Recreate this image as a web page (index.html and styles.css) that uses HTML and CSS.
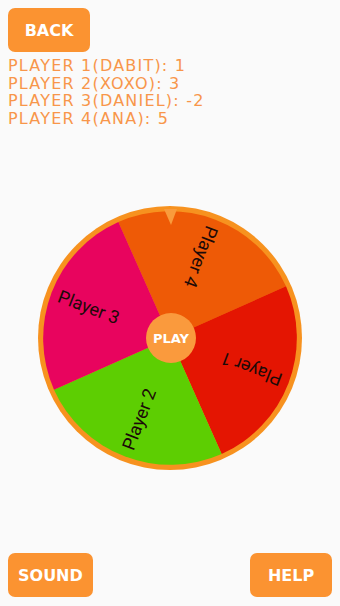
FILE: index.html
```html
<!DOCTYPE html>
<html>

<head>
    <meta charset="utf-8">
    <title>Spin</title>
    <link rel="stylesheet" href="styles.css">
</head>

<body>
    <header>
        <div class="btn">BACK</div>
    </header>
    <div id="scores">
        <p>PLAYER 1(DABIT): 1</p>
        <p>PLAYER 2(XOXO): 3</p>
        <p>PLAYER 3(DANIEL): -2</p>
        <p>PLAYER 4(ANA): 5</p>
    </div>
    <div id="wheelbox">
        <svg class="wheel" width="266" height="266" viewBox="-133 -133 266 266">
            <circle cx="0" cy="0" r="132" fill="#f7921f" />
            <!-- wedges -->
            <path d="M0 0 L-51.65 -116.02 A127.5 127.5 0 0 1 116.02 -51.65 Z" fill="#ee5a06" />
            <path d="M0 0 L116.02 -51.65 A127.5 127.5 0 0 1 51.65 116.02 Z" fill="#e41502" />
            <path d="M0 0 L51.65 116.02 A127.5 127.5 0 0 1 -116.02 51.65 Z" fill="#5dce02" />
            <path d="M0 0 L-116.02 51.65 A127.5 127.5 0 0 1 -51.65 -116.02 Z" fill="#e8045e" />
            <!-- names -->
            <text class="name" transform="rotate(111)" x="-87" y="0">Player 4</text>
            <text class="name" transform="rotate(201)" x="-87" y="0">Player 1</text>
            <text class="name" transform="rotate(291)" x="-87" y="0">Player 2</text>
            <text class="name" transform="rotate(21)" x="-87" y="0">Player 3</text>
            <polygon points="-6,-129 7,-129 1,-113" fill="#f99b3c" />
            <circle cx="1" cy="0" r="25" fill="#fa9a3d" />
            <text class="play" x="1" y="0">PLAY</text>
        </svg>
    </div>
    <footer>
        <div class="btn">SOUND</div>
        <div class="btn">HELP</div>
    </footer>
</body>

</html>
```

FILE: styles.css
```css
html {
    background-color: #fafafa;
}

body {
    margin: 0;
    padding: 8px 8px 9px 8px;
    height: 606px;
    box-sizing: border-box;
    display: flex;
    flex-direction: column;
    font-family: "DejaVu Sans", sans-serif;
}

.btn {
    min-width: 82px;
    height: 44px;
    padding: 0 10px;
    box-sizing: border-box;
    background-color: #fb9331;
    border-radius: 7px;
    color: white;
    font-weight: bold;
    font-size: 16px;
    display: flex;
    align-items: center;
    justify-content: center;
}

header {
    display: flex;
}

#scores {
    margin-top: 5px;
    color: #f8964a;
    font-size: 16px;
    line-height: 17.5px;
    letter-spacing: 1.2px;
}

#scores p {
    margin: 0;
}

#wheelbox {
    flex: 1;
    display: flex;
    align-items: center;
    justify-content: center;
    padding-bottom: 4px;
}

.name {
    font-family: Roboto, sans-serif;
    font-size: 18px;
    fill: #1c0a08;
    text-anchor: middle;
    dominant-baseline: central;
}

.play {
    font-family: "DejaVu Sans", sans-serif;
    font-weight: bold;
    font-size: 13px;
    fill: white;
    text-anchor: middle;
    dominant-baseline: central;
}

footer {
    display: flex;
    justify-content: space-between;
}
```
